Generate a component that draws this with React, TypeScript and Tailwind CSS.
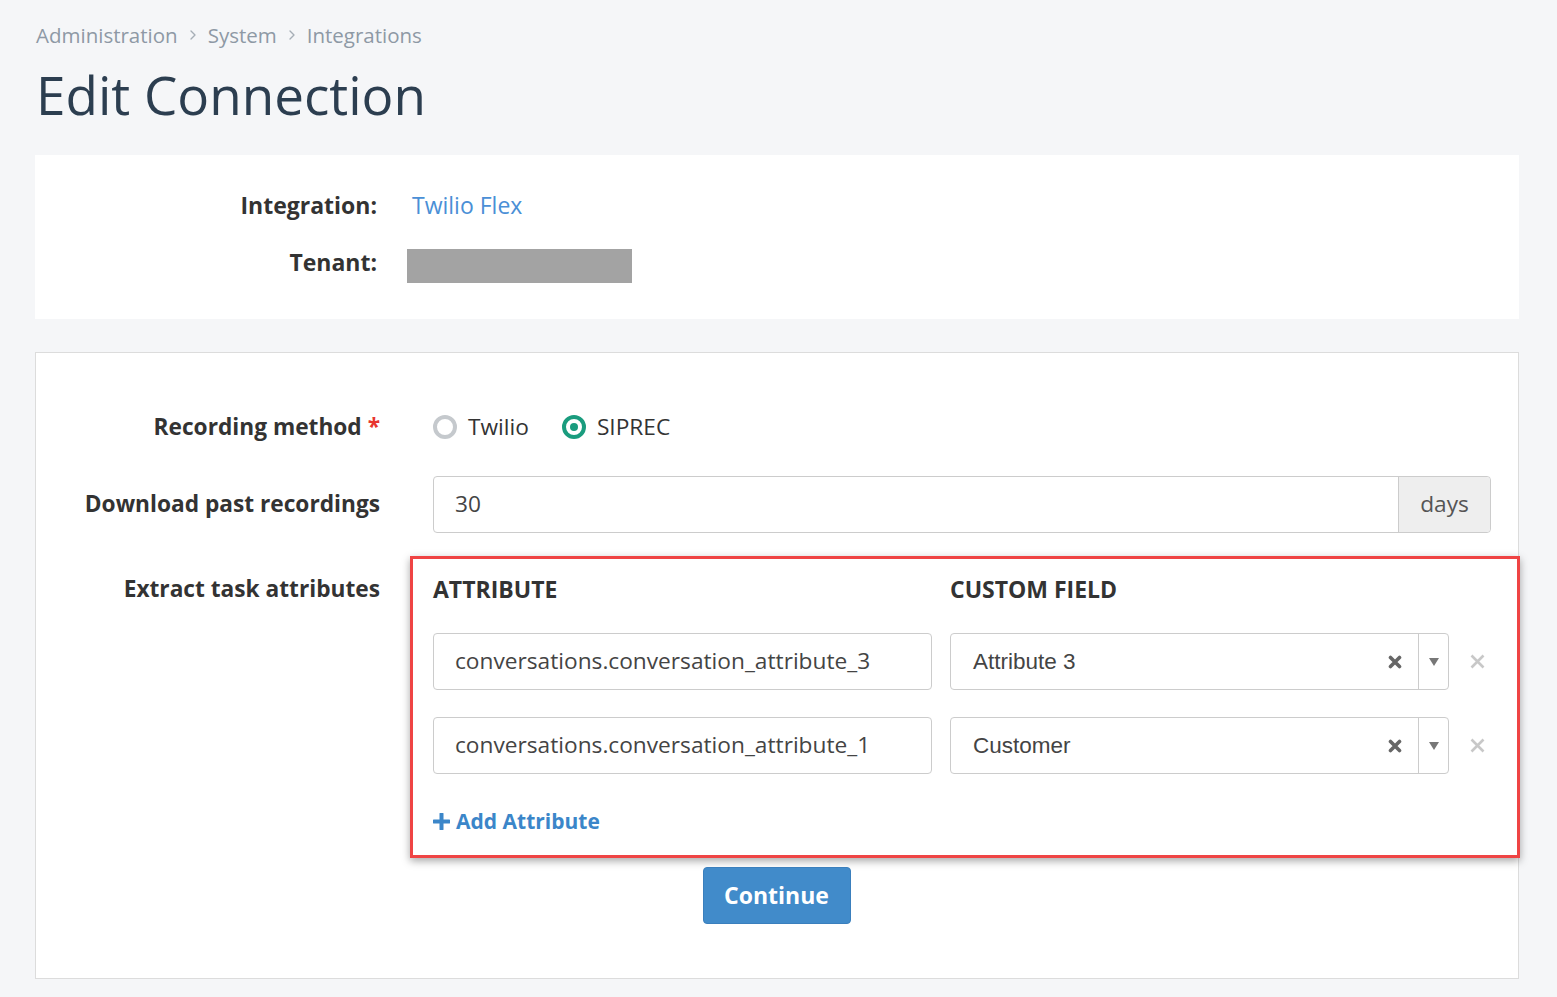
import { ChevronRight } from 'lucide-react';

const font = { fontFamily: '"Open Sans", "Liberation Sans", sans-serif' };

function Radio({ checked, label }: { checked?: boolean; label: string }) {
  return (
    <label className="flex items-center gap-[11px] text-[22.7px] text-[#333]">
      {checked ? (
        <span className="flex h-[24px] w-[24px] items-center justify-center rounded-full border-[4px] border-[#1a9c7e]">
          <span className="h-[8px] w-[8px] rounded-full bg-[#1a9c7e]" />
        </span>
      ) : (
        <span className="h-[24px] w-[24px] rounded-full border-[4px] border-[#c5c9cd]" />
      )}
      {label}
    </label>
  );
}

function AttributeRow({ attr, field }: { attr: string; field: string }) {
  return (
    <div className="grid grid-cols-[499px_499px_1fr] gap-[18px]">
      <div className="flex h-[57px] items-center rounded-[4px] border border-[#ccc] px-[21px] text-[22.7px] text-[#444]">
        {attr}
      </div>
      <div className="flex h-[57px] items-stretch rounded-[4px] border border-[#ccc]">
        <div
          className="flex flex-1 items-center pl-[22px] text-[22.5px] text-[#444]"
          style={{ fontFamily: '"Liberation Sans", Arial, sans-serif' }}
        >
          {field}
        </div>
        <div className="flex w-[46px] items-center justify-center">
          <svg width="14" height="14" viewBox="0 0 14 14" aria-hidden="true">
            <path d="M2.5 2.5 L11.5 11.5 M11.5 2.5 L2.5 11.5" stroke="#666" strokeWidth="3.6" strokeLinecap="round" />
          </svg>
        </div>
        <div className="flex w-[30px] items-center justify-center border-l border-[#ccc]">
          <svg width="10" height="8" viewBox="0 0 10 8" aria-hidden="true">
            <path d="M0 0 L10 0 L5 8 Z" fill="#777" />
          </svg>
        </div>
      </div>
      <div className="flex items-center pl-[3px]">
        <svg width="15" height="15" viewBox="0 0 15 15" aria-hidden="true">
          <path d="M1.5 1.5 L13.5 13.5 M13.5 1.5 L1.5 13.5" stroke="#c8c8c8" strokeWidth="2.6" />
        </svg>
      </div>
    </div>
  );
}

export default function App() {
  return (
    <div className="min-h-[997px] bg-[#f5f6f8] pl-[35px] pr-[38px]" style={font}>
      {/* Breadcrumb */}
      <div className="flex items-center pt-[20px] text-[20.5px] leading-[30px] text-[#8e99a5]">
        <span className="pl-px">Administration</span>
        <ChevronRight size={16} className="mx-[7px] text-[#a6aeb6]" aria-hidden="true" />
        <span>System</span>
        <ChevronRight size={16} className="mx-[7px] text-[#a6aeb6]" aria-hidden="true" />
        <span>Integrations</span>
      </div>
      <h1 className="mt-[13px] pl-[1px] text-[53px] font-medium leading-[64px] text-[#2c3e50]">Edit Connection</h1>

      {/* Summary card */}
      <div className="mt-[28px] bg-white pb-[36px] pt-[33px]">
        <div className="flex h-[34px] items-center">
          <div className="w-[342px] shrink-0 text-right text-[23px] font-bold text-[#333]">Integration:</div>
          <div className="pl-[35px] text-[23px] text-[#4a8fd6]">Twilio Flex</div>
        </div>
        <div className="mt-[27px] flex h-[34px] items-start">
          <div className="w-[342px] shrink-0 text-right text-[23px] font-bold leading-[26px] text-[#333]">Tenant:</div>
          <div className="ml-[30px] h-[34px] w-[225px] bg-[#a3a3a3]" />
        </div>
      </div>

      {/* Form card */}
      <div className="mt-[33px] border border-[#dcdcdc] bg-white pb-[54px] pr-[27px] pt-[54px]">
        <div className="flex h-[40px] items-center">
          <div className="w-[344px] shrink-0 text-right text-[22.7px] font-bold text-[#333]">
            Recording method <span className="text-[#e8352f]">*</span>
          </div>
          <div className="flex items-center gap-[33px] pl-[53px]">
            <Radio label="Twilio" />
            <Radio checked label="SIPREC" />
          </div>
        </div>

        <div className="mt-[29px] flex items-center">
          <div className="w-[344px] shrink-0 text-right text-[22.7px] font-bold text-[#333]">Download past recordings</div>
          <div className="ml-[53px] flex h-[57px] flex-1 rounded-[4px] border border-[#ccc]">
            <div className="flex flex-1 items-center px-[21px] text-[22.7px] text-[#444]">30</div>
            <div className="flex w-[92px] items-center justify-center rounded-r-[4px] border-l border-[#ccc] bg-[#eee] text-[22.7px] text-[#555]">
              days
            </div>
          </div>
        </div>

        <div className="mt-[23px] flex items-start">
          <div className="mt-[18px] w-[344px] shrink-0 text-right text-[22.7px] font-bold leading-[30px] text-[#333]">
            Extract task attributes
          </div>
          <div className="-mr-[29px] ml-[30px] min-w-0 flex-1 border-[3px] border-[#ef4444] pb-[19px] pl-[20px] pr-[26px] pt-[15px] shadow-[0_3px_8px_rgba(0,0,0,0.35)]">
            <div className="grid grid-cols-[499px_499px_1fr] gap-[18px] text-[23px] font-bold leading-[30px] text-[#333]">
              <div>ATTRIBUTE</div>
              <div>CUSTOM FIELD</div>
            </div>
            <div className="mt-[29px] flex flex-col gap-[27px]">
              <AttributeRow attr="conversations.conversation_attribute_3" field="Attribute 3" />
              <AttributeRow attr="conversations.conversation_attribute_1" field="Customer" />
            </div>
            <button type="button" className="mt-[32px] flex items-center gap-[6px] text-[21px] font-bold leading-[30px] text-[#3b86c9]">
              <svg width="17" height="17" viewBox="0 0 17 17" aria-hidden="true">
                <path d="M8.5 1 V16 M1 8.5 H16" stroke="#3b86c9" strokeWidth="4" strokeLinecap="round" />
              </svg>
              Add Attribute
            </button>
          </div>
        </div>

        <div className="mt-[9px] flex justify-center pl-[26px]">
          <button
            type="button"
            className="h-[57px] w-[148px] rounded-[4px] border border-[#3a7fbd] bg-[#418bca] text-[23px] font-bold text-white"
          >
            Continue
          </button>
        </div>
      </div>
    </div>
  );
}
